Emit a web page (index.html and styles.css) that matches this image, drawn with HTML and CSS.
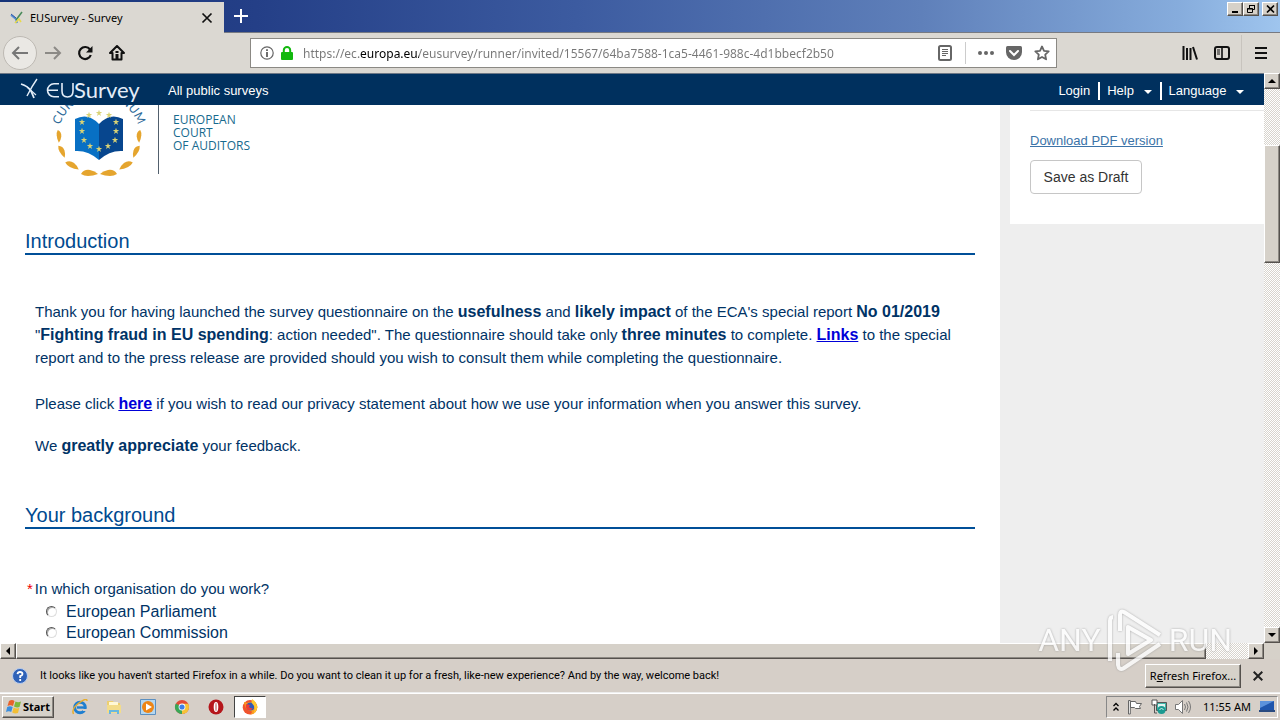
FILE: index.html
```html
<!DOCTYPE html>
<html lang="en">
<head>
<meta charset="utf-8">
<title>EUSurvey - Survey</title>
<link rel="stylesheet" href="styles.css">
</head>
<body>
<header class="titlebar">
  <div class="tab">
    <svg class="ico16" viewBox="0 0 16 16"><path d="M2 5l5 4 1 4" stroke="#5b8fd0" stroke-width="2" fill="none"/><path d="M7 10l6-8" stroke="#4a8a5a" stroke-width="1.6"/><path d="M2 4l5 4" stroke="#2d55a8"/><path d="M6 13l4-4 2 3" stroke="#e8d94a" stroke-width="1.6" fill="none"/></svg>
    <span class="tab-title">EUSurvey - Survey</span>
    <button class="plain" aria-label="Close tab"><svg width="12" height="12" viewBox="0 0 12 12"><path d="M1.500 1.500l9 9M10.500 1.500l-9 9" stroke="#111" stroke-width="1.700"/></svg></button>
  </div>
  <button class="plain newtab" aria-label="New tab"><svg width="14" height="14" viewBox="0 0 14 14"><path d="M7 0v14M0 7h14" stroke="#fff" stroke-width="2"/></svg></button>
  <div class="winbtns">
    <button class="bevel win" aria-label="Minimize"><svg width="11" height="10" viewBox="0 0 11 10"><path d="M2 8h6" stroke="#000" stroke-width="2"/></svg></button>
    <button class="bevel win" aria-label="Restore"><svg width="11" height="10" viewBox="0 0 11 10" fill="none" stroke="#000"><path d="M3.500 4V1.500h5v4H7M3 1.500h6M1.500 4.500h5v4h-5zM1 5h6"/></svg></button>
    <button class="bevel win close" aria-label="Close"><svg width="11" height="10" viewBox="0 0 11 10"><path d="M2 1.500l7 7M9 1.500l-7 7" stroke="#000" stroke-width="1.700"/></svg></button>
  </div>
</header>

<nav class="toolbar">
  <button class="plain back" aria-label="Back"><svg width="18" height="16" viewBox="0 0 18 16" fill="none" stroke="#777" stroke-width="2"><path d="M17 8H2M8 2L2 8l6 6"/></svg></button>
  <button class="plain tool" aria-label="Forward"><svg width="18" height="16" viewBox="0 0 18 16" fill="none" stroke="#8c8a86" stroke-width="2"><path d="M1 8h15M10 2l6 6-6 6"/></svg></button>
  <button class="plain tool" aria-label="Reload"><svg width="16" height="16" viewBox="0 0 16 16" fill="none" stroke="#111" stroke-width="2.200"><path d="M13 4.500A6 6 0 1 0 13.800 10"/><path d="M15.500 1v6.500H9z" fill="#111" stroke="none"/></svg></button>
  <button class="plain tool" aria-label="Home"><svg width="16" height="16" viewBox="0 0 16 16"><path d="M8 1L1 8h2.500v6.500h9V8H15z" fill="none" stroke="#111" stroke-width="2" stroke-linejoin="round"/><path d="M6.500 9h3v5h-3z" fill="#111"/><path d="M6.500 6h3v2h-3z" fill="#111"/></svg></button>
  <div class="urlbar">
    <svg width="14" height="14" viewBox="0 0 14 14"><circle cx="7" cy="7" r="6.200" fill="none" stroke="#666" stroke-width="1.200"/><path d="M7 3.200v1.700M7 6v5" stroke="#555" stroke-width="1.700"/></svg>
    <svg width="12" height="14" viewBox="0 0 12 14"><path d="M2.800 7V4.200a3.200 3.200 0 0 1 6.400 0V7" fill="none" stroke="#12b80e" stroke-width="2"/><rect y="6" width="12" height="8" rx="1" fill="#12b80e"/></svg>
    <input class="url" type="text" aria-label="Address" value="https://ec.europa.eu/eusurvey/runner/invited/15567/64ba7588-1ca5-4461-988c-4d1bbecf2b50">
    <svg width="14" height="16" viewBox="0 0 14 16" fill="none" stroke="#666"><rect x="1" y="1" width="12" height="14" rx="1.500" stroke-width="2"/><path d="M4 4.500h6M4 6.500h6M4 8.500h6M4 10.500h4"/></svg>
    <span class="urlsep"></span>
    <svg width="16" height="4" viewBox="0 0 16 4" fill="#666"><circle cx="2" cy="2" r="2"/><circle cx="8" cy="2" r="2"/><circle cx="14" cy="2" r="2"/></svg>
    <svg width="16" height="14" viewBox="0 0 16 14"><path d="M1.500 0h13Q16 0 16 1.500V6a8 8 0 0 1-16 0V1.500Q0 0 1.500 0z" fill="#666"/><path d="M4 5l4 4 4-4" fill="none" stroke="#fff" stroke-width="2" stroke-linecap="round"/></svg>
    <svg width="16" height="16" viewBox="0 0 16 16"><path d="M8 1.500l2 4.300 4.700.6-3.500 3.200.9 4.700L8 12l-4.100 2.300.9-4.700L1.300 6.400 6 5.800z" fill="none" stroke="#666" stroke-width="1.800" stroke-linejoin="round"/></svg>
  </div>
  <div class="tools-right">
    <button class="plain" aria-label="Library"><svg width="16" height="14" viewBox="0 0 16 14" stroke="#111" stroke-width="2"><path d="M1.500 0v14M5 2v12M8.500 2v12M11 1l4 12.500"/></svg></button>
    <button class="plain" aria-label="Sidebars"><svg width="16" height="14" viewBox="0 0 16 14" fill="none" stroke="#111"><rect x="1" y="1" width="14" height="12" rx="2" stroke-width="2"/><path d="M8 1v12" stroke-width="1.600"/><path d="M3 4h3M3 6h3M3 8h3"/></svg></button>
    <span class="toolsep"></span>
    <button class="plain" aria-label="Menu"><svg width="12" height="12" viewBox="0 0 12 12" stroke="#111" stroke-width="2"><path d="M0 1h12M0 6h12M0 11h12"/></svg></button>
  </div>
</nav>

<div class="browser">
  <div class="viewport">
    <div class="sitebar">
      <a class="brand" href="#" aria-label="EUSurvey home">
        <svg width="120" height="28" viewBox="0 0 120 28"><g fill="none" stroke="#e4edf8"><path d="M1 7q7 2 10 7l3 7" stroke-width="1.800"/><path d="M17 2q-5 7-10 17" stroke-width="1.400"/><path d="M7 10l9 8" stroke-width="1.200"/></g><g fill="none" stroke="#e4edf8" stroke-width="1.600"><path d="M39 6.800H34a6.500 6.500 0 0 0 0 13h5M28 13.300h10M42 6v8q0 6 5.500 6t5.500-6V6"/></g></svg>
      </a>
      <a class="all" href="#">All public surveys</a>
      <div class="sitelinks">
        <a href="#">Login</a>
        <a href="#">Help <i class="caret"></i></a>
        <a href="#">Language <i class="caret"></i></a>
      </div>
    </div>
    <div class="columns">
      <main class="survey">
        <div class="logo">
          <svg class="emblem" width="110" height="76" viewBox="0 0 110 76">
            <defs><path id="ring" d="M10 20A41 41 0 0 1 88 20"/><path id="star" d="M0-3.200L.8-.9 3.200-.9 1.200.5 2 2.900 0 1.400-2 2.900-1.200.5-3.200-.9-.8-.9z"/><path id="leaf" d="M-8 1Q-5-4 1-3 6-2 9 1 4 3-1 3-5 3-8 1z"/></defs>
            <text class="ringtext" text-anchor="middle"><textPath href="#ring" startOffset="50%">CURIA RATIONUM</textPath></text>
            <path d="M25 14q13-7 24 5v36q-11-10-24-9z" fill="#0870c4"/>
            <path d="M73 14q-13-7-24 5v36q11-10 24-9z" fill="#07468e"/>
            <g fill="#d9d275"><use href="#star" x="39" y="10"/><use href="#star" x="49" y="8"/><use href="#star" x="59" y="10"/><use href="#star" x="32" y="17"/><use href="#star" x="66" y="17"/><use href="#star" x="32" y="26"/><use href="#star" x="66" y="26"/><use href="#star" x="34" y="35"/><use href="#star" x="65" y="35"/><use href="#star" x="40" y="41"/><use href="#star" x="49" y="44"/><use href="#star" x="58" y="41"/></g>
            <g fill="#e5a52e"><use href="#leaf" transform="translate(9 31) rotate(85) scale(.75)"/><use href="#leaf" transform="translate(12 46) rotate(62) scale(.8)"/><use href="#leaf" transform="translate(22 60) rotate(28) scale(.9)"/><use href="#leaf" transform="translate(39 68)"/><use href="#leaf" transform="translate(89 31) scale(-1 1) rotate(85) scale(.75)"/><use href="#leaf" transform="translate(86 46) scale(-1 1) rotate(62) scale(.8)"/><use href="#leaf" transform="translate(76 60) scale(-1 1) rotate(28) scale(.9)"/><use href="#leaf" transform="translate(59 68) scale(-1 1)"/></g>
          </svg>
          <div class="court">EUROPEAN<br>COURT<br>OF AUDITORS</div>
        </div>
        <h2>Introduction</h2>
        <section class="intro">
          <p>Thank you for having launched the survey questionnaire on the <b>usefulness</b> and <b>likely impact</b> of the ECA's special report <b>No 01/2019</b><br>"<b>Fighting fraud in EU spending</b>: action needed". The questionnaire should take only <b>three minutes</b> to complete. <a href="#">Links</a> to the special<br>report and to the press release are provided should you wish to consult them while completing the questionnaire.</p>
          <p>Please click <a href="#">here</a> if you wish to read our privacy statement about how we use your information when you answer this survey.</p>
          <p>We <b>greatly appreciate</b> your feedback.</p>
        </section>
        <h2>Your background</h2>
        <fieldset class="question">
          <legend><span class="req">*</span>In which organisation do you work?</legend>
          <label><input type="radio" name="org">European Parliament</label>
          <label><input type="radio" name="org">European Commission</label>
        </fieldset>
      </main>
      <aside class="side">
        <hr>
        <a href="#">Download PDF version</a>
        <button class="draft">Save as Draft</button>
      </aside>
    </div>
  </div>
  <div class="vscroll">
    <button class="bevel sb" aria-label="Scroll up"><svg width="8" height="4" viewBox="0 0 8 4"><path d="M0 4l4-4 4 4z"/></svg></button>
    <div class="bevel vthumb"></div>
    <button class="bevel sb" aria-label="Scroll down"><svg width="8" height="4" viewBox="0 0 8 4"><path d="M0 0l4 4 4-4z"/></svg></button>
  </div>
  <div class="hscroll">
    <button class="bevel sb" aria-label="Scroll left"><svg width="4" height="8" viewBox="0 0 4 8"><path d="M4 0L0 4l4 4z"/></svg></button>
    <div class="bevel hthumb"></div>
    <button class="bevel sb" aria-label="Scroll right"><svg width="4" height="8" viewBox="0 0 4 8"><path d="M0 0l4 4-4 4z"/></svg></button>
  </div>
  <div class="corner"></div>
</div>

<div class="notice">
  <svg class="ico16" viewBox="0 0 16 16"><circle cx="8" cy="8" r="7.500" fill="#2f62b8" stroke="#b9cdee"/><path d="M5.500 6.200Q5.700 4 8 4t2.500 2Q10.500 7.300 8.200 8.200V10M8.200 11v2" fill="none" stroke="#fff" stroke-width="1.800"/></svg>
  <span class="msg">It looks like you haven't started Firefox in a while. Do you want to clean it up for a fresh, like-new experience? And by the way, welcome back!</span>
  <button class="bevel refresh">R<u>e</u>fresh Firefox...</button>
  <button class="plain" aria-label="Dismiss"><svg width="10" height="10" viewBox="0 0 10 10"><path d="M.7.7l8.600 8.600M9.300.7L.7 9.300" stroke="#222" stroke-width="2"/></svg></button>
</div>

<footer class="taskbar">
  <button class="bevel start"><svg class="ico16" viewBox="0 0 16 16"><path d="M3 2q3-2 5.500 0L7 7Q4.500 5.500 1.500 7z" fill="#e8622a"/><path d="M9.500 2.500Q12 4 15 2.500L13.500 8Q11 9 8 7.500z" fill="#7db83a"/><path d="M1.200 8Q4 6.700 6.700 8L5.200 13Q3 11.500 0 13z" fill="#3b8ede"/><path d="M7.700 8.500Q10.500 10 13.200 9L12 14Q9 15 6.200 13.500z" fill="#f2be35"/></svg>Start</button>
  <div class="launch">
    <svg class="ico16" viewBox="0 0 16 16"><circle cx="8" cy="8.500" r="5.300" fill="none" stroke="#1f7fd0" stroke-width="3"/><path d="M5 8.500h8" stroke="#1f7fd0" stroke-width="2.400"/><path d="M11 11h5" stroke="#d6cfc8" stroke-width="2"/><path d="M1.500 15Q-1 10 7 4T15 2" fill="none" stroke="#e7ad2d" stroke-width="1.500"/></svg>
    <svg class="ico16" viewBox="0 0 16 16"><path d="M1 2h6l1 2h6v9H1z" fill="#edcf70"/><path d="M3 3h9v4H3z" fill="#fff8d5"/><path d="M1 6h14v8H1z" fill="#f3dc8a"/><path d="M3 15v-4h10v4h-2v-2H5v2z" fill="#68b7e0"/></svg>
    <svg class="ico16" viewBox="0 0 16 16"><path d="M.5.500h15v15H.5z" fill="#b5d7ef" stroke="#5b8fc0"/><circle cx="8" cy="8" r="6" fill="#ee8515"/><path d="M6 4.500l6 3.500-6 3.500z" fill="#fff"/></svg>
    <svg class="ico16" viewBox="0 0 16 16"><circle cx="8" cy="8" r="7" fill="#e34a38"/><path d="M8 8L1.900 4.500A7 7 0 0 0 8 15z" fill="#39a757"/><path d="M8 15a7 7 0 0 0 6.200-10.200H8V8z" fill="#f6c338"/><circle cx="8" cy="8" r="3.400" fill="#fff"/><circle cx="8" cy="8" r="2.600" fill="#3f7fe8"/></svg>
    <svg class="ico16" viewBox="0 0 16 16"><circle cx="8" cy="8" r="7.500" fill="#b5161b"/><ellipse cx="8" cy="8" rx="2.300" ry="5" fill="#fff"/><ellipse cx="8" cy="8" rx="1" ry="4.300" fill="#d8a0a0"/></svg>
  </div>
  <button class="task" aria-label="Firefox"><svg class="ico16" viewBox="0 0 16 16"><circle cx="8" cy="8.300" r="7.300" fill="#f0532d"/><path d="M2 3q2 0 3 1 3-2 6 0l4 5q-1 6-7 6.500Q12 12 8 12 3 11 2 3z" fill="#fb9b20"/><circle cx="8.500" cy="7.500" r="4" fill="#3358b8"/><path d="M10 0q5 3 5.500 8-1 5-4 6.500 3-6-2-11z" fill="#fdc72e"/><path d="M4 5l4 1-1 2q2 2 4 1-2 3-5 2-3-2-2-6z" fill="#ee3d37"/></svg></button>
  <div class="tray">
    <svg width="6" height="10" viewBox="0 0 6 10" fill="none" stroke="#000" stroke-width="1.300"><path d="M.5 4L3 1.500 5.500 4M.5 8.500L3 6l2.500 2.500"/></svg>
    <svg class="ico16" viewBox="0 0 16 16" fill="#fff" stroke="#666"><path d="M1.500 15V1.500h1.800V15zM3.500 2.500h5l1 2h5l-2 3 1 2h-5l-1-1h-4z"/></svg>
    <svg class="ico16" viewBox="0 0 16 16"><path d="M5.500 3.500h10v8h-10z" fill="#3fb6a9" stroke="#555"/><path d="M7 5h7v4H7z" fill="#dff3ef"/><path d="M1 1h5v5H1z" fill="#fff" stroke="#555"/><path d="M3.500 5v9H6" fill="none" stroke="#555"/><circle cx="10.500" cy="11" r="4" fill="#1b9a91"/><path d="M8.500 11l2-2 2 2" fill="none" stroke="#d8f5ef"/></svg>
    <svg class="ico16" viewBox="0 0 16 16" fill="none" stroke="#777"><path d="M.5 5.500h3l4-4v13l-4-4h-3z" fill="#fff"/><path d="M9.500 5q2 3 0 6M11.500 3.500q3 4.500 0 9M13.500 2q4 6 0 12"/></svg>
    <time>11:55 AM</time>
    <svg class="ico16" viewBox="0 0 16 16"><path d="M1 2h14v9H1z" fill="#1f56ad"/><path d="M1 2h14L1 9z" fill="#5b92dc"/><path d="M0 11h16v2H0z" fill="#294a80"/></svg>
  </div>
</footer>

<div class="watermark"><span>ANY</span><svg width="56" height="66" viewBox="0 0 56 66" fill="none" stroke="#fff" stroke-width="4" stroke-linejoin="round"><path d="M3 54V14Q3 10 6 10M13 24V8Q13 3 17 5L53 28M11 46v12Q12 64 17 61L53 37M21 20v27l23-14z"/></svg><span>RUN</span></div>
</body>
</html>
```
FILE: styles.css
```css
* { box-sizing: border-box; }
body {
  margin: 0;
  height: 100vh;
  display: flex;
  flex-direction: column;
  overflow: hidden;
  background: #d6cfc8;
  font: 11px/16px "Noto Sans", sans-serif;
  color: #000;
}
svg { flex: none; display: block; }
button { font: inherit; color: inherit; padding: 0; }
.ico16 { width: 16px; height: 16px; }
.plain { border: 0; background: none; display: flex; align-items: center; justify-content: center; }
.bevel {
  border: 1px solid;
  border-color: #fff #55514d #55514d #fff;
  background: #d6d1c9;
  box-shadow: inset -1px -1px 0 #8d8983;
  display: flex;
  align-items: center;
  justify-content: center;
}

/* title bar */
.titlebar {
  flex: none;
  height: 33px;
  display: flex;
  align-items: flex-start;
  border-bottom: 1px solid #777a82;
  background: linear-gradient(90deg, #163478 0, #243f87 20%, #3c5ba0 45%, #5f80ba 72%, #86acdc 92%, #9fc5ee 100%);
}
.tab {
  width: 224px;
  height: 33px;
  margin-top: 2px;
  padding: 0 11px 2px 9px;
  display: flex;
  align-items: center;
  gap: 5px;
  background: #dbd8d2;
}
.tab-title { flex: 1; }
.newtab { width: 34px; height: 32px; }
.winbtns { display: flex; margin: 2px 2px 0 auto; }
.win { width: 16px; height: 14px; }
.close { margin-left: 3px; }

/* navigation toolbar */
.toolbar {
  flex: none;
  height: 40px;
  display: flex;
  align-items: center;
  padding: 0 13px 0 3px;
  background: #dbd8d2;
}
.back { width: 34px; height: 34px; border: 1px solid #bdb9b3; border-radius: 50%; background: #eae8e4; }
.tool { width: 32px; height: 32px; }
.urlbar {
  flex: 0 1 807px;
  height: 30px;
  margin-left: 117px;
  padding: 0 6px 0 9px;
  display: flex;
  align-items: center;
  gap: 7px;
  border: 1px solid #8b8984;
  background: #fff;
}
.urlbar svg:nth-of-type(n+4) { margin-left: 5px; }
.url {
  flex: 1;
  min-width: 0;
  height: 24px;
  border: 0;
  padding: 0 0 0 3px;
  outline: 0;
  font: 12px "Noto Sans", sans-serif;
  color: transparent;
  background: linear-gradient(90deg, #777 60px, #000 60px 119px, #777 119px);
  background-clip: text;
}
.urlsep { width: 1px; height: 22px; margin-left: 6px; background: #ccc; }
.tools-right { display: flex; align-items: center; gap: 16px; margin-left: auto; }
.toolsep { width: 1px; height: 36px; margin: 0 -3px 0 -5px; background: #c8c4be; }

/* page viewport and its scroll bars */
.browser {
  flex: 1;
  min-height: 0;
  display: grid;
  grid-template: minmax(0, 1fr) 16px / minmax(0, 1fr) 16px;
}
.viewport { overflow: hidden; background: #eee; font-family: "Liberation Sans", Arial, sans-serif; }
.vscroll, .hscroll {
  display: flex;
  background: conic-gradient(#fff 25%, #d8d4cd 0 50%, #fff 0 75%, #d8d4cd 0) 0 0 / 2px 2px;
}
.vscroll { flex-direction: column; justify-content: space-between; }
.hscroll { justify-content: space-between; }
.sb { flex: none; width: 16px; height: 16px; }
.vthumb { height: 118px; margin: 56px 0 auto; }
.hthumb { flex: 0 1 1190px; margin-right: auto; }
.corner { background: #d6d1c9; }

/* site header */
.sitebar {
  height: 32px;
  display: flex;
  align-items: center;
  padding: 2px 20px 0;
  border-top: 1px solid #6d7785;
  background: #00305e;
  font-size: 13px;
}
.sitebar a { color: #fff; text-decoration: none; }
.brand { width: 148px; position: relative; }
.brand::after {
  content: "Survey";
  position: absolute;
  left: 54px;
  top: 1px;
  font: 22px/24px Lato, sans-serif;
  color: #e4edf8;
}
.sitelinks { display: flex; margin-left: auto; }
.sitelinks a { padding: 0 0 0 7px; line-height: 18px; }
.sitelinks a + a { border-left: 2px solid #fff; margin-left: 8px; }
.caret { display: inline-block; margin-left: 6px; border: 4px solid transparent; border-top-color: #fff; border-bottom: 0; vertical-align: 1px; }

/* survey columns */
.columns { display: flex; align-items: flex-start; gap: 10px; }
.survey { flex: 1; min-width: 0; padding: 0 25px 20px; background: #fff; color: #003366; font-size: 16px; line-height: 23px; }
.logo { height: 125px; display: flex; align-items: flex-start; padding-left: 25px; }
.ringtext { font: 12px Lato, sans-serif; fill: #2d6a99; }
.court {
  height: 69px;
  margin-left: -2px;
  padding: 8px 0 0 14px;
  border-left: 1px solid #52606d;
  font: 12px/13px "Open Sans", sans-serif;
  color: #176a8e;
}
h2 { margin: 0; border-bottom: 2px solid #004f98; font: 20px/23px "Liberation Sans", Arial, sans-serif; color: #004a90; }
.intro { padding: 45px 0 47px 10px; font-size: 15px; }
.intro p { margin: 0 0 23px; }
.intro p:nth-child(2) { margin-bottom: 19px; }
.intro p:last-child { margin: 0; }
.intro b, .intro a { font-size: 16px; line-height: 16px; }
.intro a { color: #0000d8; font-weight: bold; }
.question { border: 0; margin: 48px 0 0; padding: 0 2px; }
legend { padding: 0; height: 24px; font-size: 15px; }
.req { margin-right: 2px; color: #e00; }
.question label { display: flex; align-items: center; gap: 9px; line-height: 21px; padding-left: 19px; }
.question input {
  appearance: none;
  width: 11px;
  height: 11px;
  margin: 0;
  border: 1px solid;
  border-color: #555 #ddd #ddd #555;
  border-radius: 50%;
  box-shadow: inset 1px 1px 0 #aaa;
}
.side { width: 254px; padding: 5px 0 30px 20px; background: #fff; font-size: 13px; }
.side hr { margin: 0 0 21px; border: 0; border-top: 1px solid #e6e6e6; }
.side a { display: block; line-height: 17px; color: #3b73a8; }
.draft { display: block; width: 112px; height: 34px; margin-top: 11px; border: 1px solid #c6c6c6; border-radius: 4px; background: #fff; color: #333; font-size: 14px; }

/* notification bar */
.notice { flex: none; height: 34px; display: flex; align-items: center; padding: 0 17px 0 12px; gap: 12px; border-bottom: 1px solid #eee; }
.msg { flex: 1; white-space: nowrap; font-family: Roboto, sans-serif; }
.refresh { width: 96px; height: 24px; }

/* taskbar */
.taskbar { flex: none; height: 27px; display: flex; align-items: center; padding: 0 2px; border-top: 1px solid #fff; }
.start { width: 52px; height: 22px; gap: 1px; font-weight: bold; }
.launch { display: flex; gap: 18px; margin: 0 10px 0 18px; }
.task { width: 32px; height: 22px; display: flex; align-items: center; justify-content: center; background: #fff; border: 1px solid; border-color: #444 #fff #fff #444; }
.tray { height: 22px; display: flex; align-items: center; gap: 8px; margin-left: auto; padding: 0 2px 0 6px; border: 1px solid; border-color: #888 #fff #fff #888; }
.tray time { margin-left: 4px; }

/* overlay mark */
.watermark {
  position: absolute;
  right: 48px;
  bottom: 47px;
  display: flex;
  align-items: center;
  gap: 6px;
  opacity: 0.8;
  pointer-events: none;
  color: #fff;
  font: 32px/66px Roboto, sans-serif;
  filter: drop-shadow(0 0 1px #999);
}
```
